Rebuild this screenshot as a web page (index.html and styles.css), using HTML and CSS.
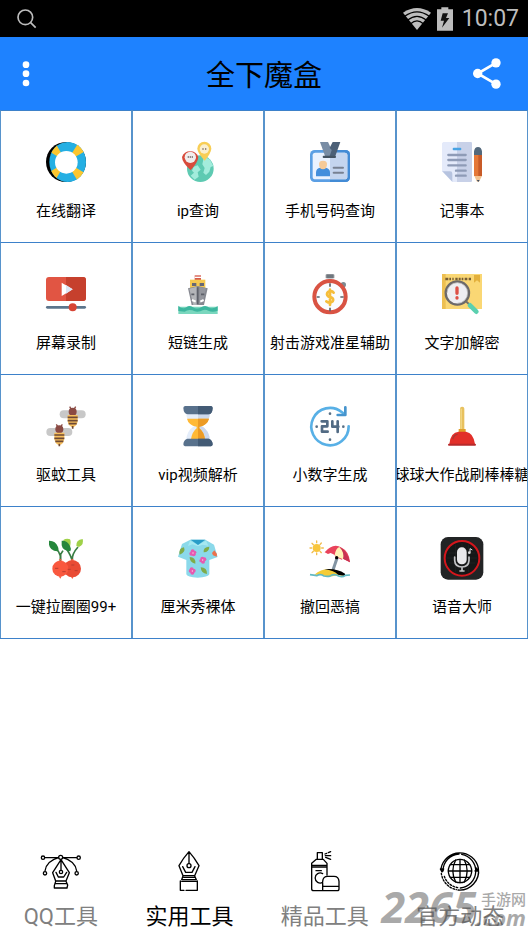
FILE: index.html
```html
<!DOCTYPE html>
<html lang="zh-CN">
<head>
<meta charset="utf-8">
<meta name="viewport" content="width=device-width, initial-scale=1">
<title>全下魔盒</title>
<link rel="stylesheet" href="styles.css">
</head>
<body>
<div class="status">
  <svg class="status-search" viewBox="0 0 60 60"><circle cx="25" cy="25" r="22"/><path d="M41 41L56 56"/></svg>
  <svg class="status-wifi" viewBox="0 0 84 66"><path class="wifi-fill" d="M42 66L0 14Q42 -14 84 14Z"/><path class="wifi-gap" d="M5 25Q42 -2 79 25M14 36Q42 14 70 36M23 47Q42 30 61 47"/></svg>
  <svg class="status-battery" viewBox="0 0 48 70"><path fill="#bdbdbd" d="M13 0H34V6H48V70H0V6H13Z"/><path fill="#111" d="M17 18H33L27 32H37L15 61L21 40H11Z"/></svg>
  <span class="clock">10:07</span>
</div>
<header class="bar">
  <button class="bar-button" type="button" aria-label="菜单"><svg class="dots" viewBox="0 0 24 78"><circle cx="12" cy="11" r="10"/><circle cx="12" cy="38" r="10"/><circle cx="12" cy="66" r="10"/></svg></button>
  <h1 class="title">全下魔盒</h1>
  <button class="bar-button" type="button" aria-label="分享"><svg class="share" viewBox="0 0 84 92"><path d="M69 14L14 46L69 78"/><circle cx="69" cy="14" r="14"/><circle cx="14" cy="46" r="14"/><circle cx="69" cy="78" r="14"/></svg></button>
</header>
<main class="tools">
  <button class="tool" type="button">
    <svg class="icon" viewBox="0 0 120 120"><defs><clipPath id="ring"><ellipse cx="65" cy="60" rx="55" ry="60"/></clipPath></defs><circle cx="60" cy="60" r="60"/><g clip-path="url(#ring)" fill="none" stroke-width="50"><circle cx="61" cy="60" r="50" stroke="#24afe3"/><circle cx="61" cy="60" r="50" stroke="#fbc62f" pathLength="360" stroke-dasharray="28 62" transform="rotate(31 61 60)"/></g><circle cx="61" cy="61" r="34" fill="#fff"/></svg>
    <span class="label">在线翻译</span>
  </button>
  <button class="tool" type="button">
    <svg class="icon" viewBox="0 0 120 120"><circle cx="67" cy="80" r="40" fill="#5ecab2"/><path fill="#a3ecdc" d="M78 43L96 53L106 72L98 75L94 89L84 99L76 92L80 78L73 67ZM47 74L59 70L68 83L59 91L62 104L50 113L38 101L48 92L42 86Z"/><path fill="#f8ce55" d="M80 56Q58 31 58 20A21 21 0 0 1 100 20Q99 34 80 56Z"/><path fill="#d84b3c" d="M38 85Q12 61 12 45A26 26 0 0 1 61 45Q60 61 38 85Z"/><circle cx="79" cy="21" r="14" fill="#faefcf"/><circle cx="37" cy="46" r="17" fill="#f1eeee"/><path stroke="#786867" stroke-width="5" d="M29 45h4m2 0h4m2 0h4M73 21h4m4 0h4"/></svg>
    <span class="label">ip查询</span>
  </button>
  <button class="tool" type="button">
    <svg class="icon" viewBox="0 0 120 120"><rect y="24" width="120" height="96" rx="14" fill="#5b9fe4"/><path fill="#438bd5" d="M60 24h46q14 0 14 14v68q0 14-14 14H60z"/><rect x="8" y="32" width="104" height="80" rx="8" fill="#eaf2ff"/><path fill="#c4d5ef" d="M60 32h44q8 0 8 8v64q0 8-8 8H60z"/><path fill="#798da5" d="M30 0H54L74 42H45Z"/><path fill="#4c6077" d="M68 0H91L76 42H59L65 25L59 17Z"/><rect x="38" y="41" width="40" height="7" rx="3" fill="#455463"/><path fill="#438edc" d="M18 103V91Q18 79 31 77H48Q60 80 60 91V103Z"/><path fill="#f6ca98" d="M27 66Q27 56 39 56T51 66Q51 82 39 82T27 66Z"/><path stroke="#778192" stroke-width="6" stroke-linecap="round" d="M71 77H99M71 92H99"/></svg>
    <span class="label">手机号码查询</span>
  </button>
  <button class="tool" type="button">
    <svg class="icon" viewBox="0 0 120 120"><path fill="#e4eafa" d="M4 0H88V120H31L0 88V4Z"/><path fill="#c8d1e8" d="M45 0H86q4 0 4 4V116q0 4-4 4H45Z"/><path fill="#b6c3df" d="M1 88H24q7 0 7 7v24Z"/><rect x="32" y="17" width="26" height="8" rx="3" fill="#48a3e3"/><path stroke="#8e9bb6" stroke-width="7" stroke-linecap="round" d="M19 39H71M19 54H71M19 70H71M42 86H71M42 101H71"/><path fill="#53697c" d="M96 40V28Q98 15 108 15T120 28V40Z"/><path fill="#e57837" d="M96 39H120V102H96Z"/><path fill="#c85b28" d="M109 39H120V102H109Z"/><path fill="#f4c28f" d="M97 102H120L111 119H105Z"/><path fill="#3f5062" d="M104 114h9l-4 6Z"/></svg>
    <span class="label">记事本</span>
  </button>
  <button class="tool" type="button">
    <svg class="icon" viewBox="0 0 120 120"><rect y="9" width="120" height="72" rx="9" fill="#e15543"/><path fill="#c6402d" d="M60 9h51q9 0 9 9v54q0 9-9 9H60z"/><path fill="#fff" d="M47 26V66L80 46Z"/><path fill="#dce5f4" d="M60 33V59L80 46Z"/><path stroke="#5c758c" stroke-width="8" stroke-linecap="round" d="M4 100H116"/><circle cx="80" cy="100" r="12" fill="#d74434"/></svg>
    <span class="label">屏幕录制</span>
  </button>
  <button class="tool" type="button">
    <svg class="icon" viewBox="0 0 120 120"><path fill="#d65a4b" d="M50 4H69V19H50Z"/><path fill="#fff" d="M50 8H69V12H50Z"/><path fill="#f5c951" d="M36 17H82V47H36Z"/><path fill="#666875" d="M42 27h13v9H42zm23 0h13v9H65z"/><path fill="#868890" d="M30 43L59 36L89 43L78 93H41Z"/><path fill="#b3b5b9" d="M34 44L56 38V93H46Z"/><path fill="#94969d" d="M65 39L84 43L76 78L63 92Z"/><path stroke="#5d6069" stroke-width="5" d="M40 61H49M69 61H79M59 40V90"/><path stroke="#fff" stroke-width="6" d="M42 78L53 83M67 83L77 78"/><path fill="#7ad7be" d="M1 98H119V120H1Z"/><path fill="#3db69e" d="M1 95Q14 108 26 99Q34 92 45 100Q57 108 71 99Q83 92 94 101Q107 106 119 96V110Q103 116 91 110Q79 104 67 112Q54 116 43 109Q30 105 20 113L1 111Z"/></svg>
    <span class="label">短链生成</span>
  </button>
  <button class="tool" type="button">
    <svg class="icon" viewBox="0 0 120 120"><rect x="47" y="1" width="26" height="12" rx="2" fill="#858b91"/><path stroke="#5b626b" stroke-width="3" d="M54 1v12m6-12v12m6-12v12"/><path fill="#c3c9cf" d="M54 13h12v8H54z"/><circle cx="100" cy="32" r="8" fill="#7e8990"/><circle cx="60" cy="68" r="47" fill="#fafcff" stroke="#d95343" stroke-width="12"/><path stroke="#59616b" stroke-width="5" d="M60 28V38M60 101V112M20 69H29M91 69H101"/><path fill="none" stroke="#f5bd3b" stroke-width="8" stroke-linecap="round" stroke-linejoin="round" d="M71 56Q67 50 58 52Q48 56 52 64Q54 68 63 70Q73 74 68 82Q60 90 49 82M60 47V93"/></svg>
    <span class="label">射击游戏准星辅助</span>
  </button>
  <button class="tool" type="button">
    <svg class="icon" viewBox="0 0 120 120"><rect width="120" height="105" fill="#fad774"/><path fill="#edbf51" d="M0 0H11V105H0Z"/><path stroke="#765d35" stroke-width="7" d="M10 15h9m3 0h5m4 0h4m5 0h7m3 0h6m3 0h5m4 0h8m4 0h7"/><path fill="#e3b03c" d="M96 3H114V26L105 19L96 26Z"/><circle cx="46" cy="57" r="35" fill="#eeeef2" stroke="#6c6969" stroke-width="7"/><path fill="none" stroke="#aaa" stroke-width="2" d="M15 57A31 31 0 1 1 46 88"/><path stroke="#dd5047" stroke-width="10" stroke-linecap="round" d="M45 42V58M45 71V72"/><path stroke="#73706b" stroke-width="6" d="M71 81L83 92"/><path stroke="#5bd0af" stroke-width="14" stroke-linecap="round" d="M84 94L103 113"/></svg>
    <span class="label">文字加解密</span>
  </button>
  <button class="tool" type="button">
    <svg class="icon" viewBox="0 0 120 120"><defs><g id="bee"><rect x="1" y="13" width="78" height="24" rx="12" fill="#c8c8c8"/><path fill="none" stroke="#8a4a43" stroke-width="4" d="M31 2L36 10M49 2L44 10"/><circle cx="40" cy="17" r="12" fill="#8a4a43"/><path fill="#f8c05e" d="M25 27H55V43Q55 59 40 65Q25 59 25 43Z"/><path stroke="#6e4935" stroke-width="5" d="M25 34H55M25 44H55M28 53H52M40 60V68"/></g></defs><use href="#bee" x="40"/><use href="#bee" y="53"/></svg>
    <span class="label">驱蚊工具</span>
  </button>
  <button class="tool" type="button">
    <svg class="icon" viewBox="0 0 120 120"><path fill="#e4edfa" d="M24 20H96Q95 47 71 60Q93 72 96 103H24Q27 73 49 60Q26 48 24 20Z"/><path fill="#ccd8ec" d="M60 20H96Q95 47 71 60Q93 72 96 103H60Z"/><path fill="#ffb936" d="M27 38H93Q88 57 64 62V67Q78 78 81 100H39Q42 78 56 67V62Q31 57 27 38Z"/><path fill="#ec9b25" d="M60 38H93Q88 57 64 62V67Q78 78 81 100H60Z"/><path fill="#58718c" d="M21 0H99Q104 1 104 6Q103 25 91 25H29Q17 24 16 6Q16 1 21 0ZM28 98H92Q103 101 104 115Q104 120 99 121H21Q16 120 16 115Q17 101 28 98Z"/><path fill="#435b75" d="M60 0H99Q104 1 104 6Q103 25 91 25H60ZM60 98H92Q103 101 104 115Q104 120 99 121H60Z"/></svg>
    <span class="label">vip视频解析</span>
  </button>
  <button class="tool" type="button">
    <svg class="icon" viewBox="0 0 120 120"><path fill="none" stroke="#58b0e6" stroke-width="8" stroke-linecap="round" d="M116 61A56 56 0 1 1 95 18L104 25"/><path fill="none" stroke="#4694cd" stroke-width="8" stroke-linecap="round" stroke-linejoin="round" d="M106 4V27H83"/><circle cx="60" cy="23" r="4" fill="#597086"/><circle cx="20" cy="62" r="4" fill="#597086"/><circle cx="100" cy="62" r="4" fill="#597086"/><circle cx="60" cy="101" r="4" fill="#597086"/><path fill="none" stroke="#526b84" stroke-width="8" stroke-linejoin="round" stroke-linecap="round" d="M35 46H52V61H36V77H53M67 46V62H85M83 46V78"/></svg>
    <span class="label">小数字生成</span>
  </button>
  <button class="tool" type="button">
    <svg class="icon" viewBox="0 0 120 120"><rect x="54" y="2" width="13" height="74" rx="6" fill="#e8c15e"/><path fill="#f1d582" d="M55 8h5v66h-5z"/><path fill="#df9f29" d="M50 69H71V78H50Z"/><path fill="#e22f29" d="M22 114Q26 78 50 77H72Q94 80 99 114Z"/><path fill="none" stroke="#a63a35" stroke-width="4" d="M32 99Q36 86 47 85"/><path stroke="#b62a2b" stroke-width="6" stroke-linecap="round" d="M21 116H99"/></svg>
    <span class="label">球球大作战刷棒棒糖</span>
  </button>
  <button class="tool" type="button">
    <svg class="icon" viewBox="0 0 120 120"><path fill="none" stroke="#397c43" stroke-width="5" d="M43 69V53Q39 39 29 31M78 68Q76 54 63 35M79 67Q77 48 96 27M44 66V49L51 38"/><path fill="#9fd148" d="M51 7Q61 0 72 4Q76 11 72 26ZM91 24Q89 6 110 3Q115 19 99 27Z"/><path fill="#25863b" d="M9 8Q28 7 36 27Q40 38 34 40Q12 38 9 20ZM47 8Q64 7 72 24Q77 33 73 40Q50 39 47 22Z"/><circle cx="79" cy="92" r="26" fill="#e94b35"/><circle cx="43" cy="92" r="24" fill="#f9583f"/><path fill="#f9583f" d="M37 67l6-5 7 6M73 67l6-5 7 6M38 115l5 7 4-7M75 116l4 7 4-7"/><path stroke="#b93d30" stroke-width="3" d="M27 91h10M49 101h10M76 81h9M65 94h9M86 98h9"/></svg>
    <span class="label">一键拉圈圈99+</span>
  </button>
  <button class="tool" type="button">
    <svg class="icon" viewBox="0 0 120 120"><path fill="#8bd9ea" d="M37 5L12 18L0 56L25 66V109Q27 118 59 119Q91 118 94 109V66L119 57L108 20L82 5Z"/><path fill="#a6e8f2" d="M36 8L60 20L84 8L91 23L74 20L60 25L43 19L30 24Z"/><path fill="#299cc8" d="M38 5H82L60 21Z"/><path fill="#7fac4a" d="M5 50Q1 31 18 28Q24 43 5 50ZM77 43Q75 27 94 26Q94 42 77 43ZM52 77Q34 73 35 57Q54 57 52 77ZM68 88Q88 89 87 108Q69 106 68 88Z"/><g fill="#e65ab0"><circle cx="44" cy="40" r="6"/><circle cx="40" cy="47" r="6"/><circle cx="47" cy="49" r="6"/><circle cx="50" cy="43" r="5"/><circle cx="73" cy="62" r="6"/><circle cx="79" cy="64" r="6"/><circle cx="75" cy="71" r="6"/><circle cx="69" cy="68" r="5"/><circle cx="41" cy="94" r="6"/><circle cx="47" cy="98" r="6"/><circle cx="43" cy="104" r="6"/><circle cx="37" cy="99" r="5"/></g><path fill="#ec714c" d="M109 37L117 48L116 56L105 52L102 45Z"/><g fill="#ffd4e7"><circle cx="45" cy="45" r="2"/><circle cx="74" cy="66" r="2"/><circle cx="43" cy="99" r="2"/></g></svg>
    <span class="label">厘米秀裸体</span>
  </button>
  <button class="tool" type="button">
    <svg class="icon" viewBox="0 0 120 120"><circle cx="20" cy="30" r="12" fill="#f8c63d"/><path stroke="#f2bc4c" stroke-width="4" stroke-linecap="round" d="M20 9v5m0 31v5M0 30h5m30 0h5M6 16l4 4m20 20l4 4M34 15l-4 5M10 40l-4 4"/><path stroke="#8294a3" stroke-width="9" d="M82 58L69 96"/><path fill="#e9435b" d="M44 43Q69 13 95 29Q118 40 120 73L99 62L95 65L77 56L73 50L62 45L54 48Z"/><path fill="#c83251" d="M88 27Q111 36 120 73L99 62Z"/><path fill="#fff1b5" d="M88 27Q77 32 74 51Q80 60 90 60L99 64Q104 43 88 27Z"/><circle cx="80" cy="59" r="5"/><path fill="#f5cc37" d="M13 110Q33 93 58 94Q90 96 105 114L84 112L56 117L35 111Z"/><path d="M43 94Q79 90 105 107L105 114L84 110Q74 98 43 94Z"/><path fill="none" stroke="#62b9c3" stroke-width="5" d="M0 110Q12 112 20 113Q32 106 42 114Q54 117 62 113Q73 106 86 114Q98 119 106 112L120 111"/></svg>
    <span class="label">撤回恶搞</span>
  </button>
  <button class="tool" type="button">
    <svg class="icon" viewBox="0 0 120 120"><rect x="-4" y="-3" width="128" height="128" rx="22" fill="#222425"/><circle cx="60" cy="61" r="52" fill="#151717" stroke="#d4161c" stroke-width="6"/><path stroke="#303335" stroke-width="1" d="M20 45H100M15 60H105M20 75H100M40 20V102M60 14V110M80 20V102"/><rect x="45" y="28" width="29" height="51" rx="14" fill="#e8e8ea"/><path fill="none" stroke="#c2c3c5" stroke-width="5" stroke-linecap="round" d="M38 57V67Q39 86 60 87Q80 86 81 67V57M60 87V98M54 99H66"/><path fill="none" stroke="#ddd" stroke-width="3" d="M84 43V32L91 36"/><circle cx="82" cy="44" r="4" fill="#ddd"/></svg>
    <span class="label">语音大师</span>
  </button>
</main>
<nav class="tabs">
  <button class="tab" type="button">
    <svg class="icon line" viewBox="0 0 120 120"><path d="M12 20H53M65 20H107M53 20Q16 30 12 60M65 20Q103 30 107 60M60 26L35 65L44 90H75L85 65ZM60 27V58M45 64L52 78H68L77 64M44 91L40 104V111H78L80 102L75 91M42 98H77"/><g fill="#fff"><circle cx="6" cy="20" r="5"/><circle cx="59" cy="19" r="6"/><circle cx="113" cy="20" r="5"/><circle cx="12" cy="67" r="5"/><circle cx="107" cy="67" r="5"/><circle cx="60" cy="63" r="5"/></g></svg>
    <span class="tab-label">QQ工具</span>
  </button>
  <button class="tab active" type="button" aria-current="page">
    <svg class="icon line" viewBox="0 0 120 120"><path d="M60 2Q43 21 30 44L42 74H77L90 44Q76 20 60 2ZM60 4V38M41 47L50 64H69L78 47M42 75L38 86H82L77 75M38 91H82M34 90V118H45M51 118H85V90M44 79H76"/><circle cx="60" cy="44" r="6" fill="#fff"/></svg>
    <span class="tab-label">实用工具</span>
  </button>
  <button class="tab" type="button">
    <svg class="icon line" viewBox="0 0 120 120"><path d="M37 5H52V25H37ZM34 25H55L66 37V72M34 25L20 37V113Q20 119 26 119H97Q102 119 102 113V91Q101 76 87 76H68Q54 76 53 91V118M20 43H66M20 48H66M33 59H49M55 106H102M53 68A15 15 0 1 0 53 94M60 9L65 7M70 5L77 2M61 14H77M62 19L77 25"/></svg>
    <span class="tab-label">精品工具</span>
  </button>
  <button class="tab" type="button">
    <svg class="icon line" viewBox="0 0 120 120"><circle cx="60" cy="60" r="35"/><path d="M60 25V95M25 60H95M31 41H89M31 79H89M47 27Q30 60 47 93M73 27Q90 60 73 93M3 53A57 57 0 0 1 115 51A57 57 0 0 1 54 117M9 60A51 51 0 0 1 57 9M65 10A51 51 0 0 1 61 111"/><path stroke-dasharray="5 5" d="M4 67A57 57 0 0 0 49 116M13 76A50 50 0 0 0 55 110"/><path fill="#000" d="M1 54h10l-5 9zM105 60h10l-5-9z"/></svg>
    <span class="tab-label">官方动态</span>
  </button>
</nav>
<div class="watermark">
  <span class="mark-number">2265</span>
  <span class="mark-side"><span class="mark-name">手游网</span><span class="mark-domain">.com</span></span>
</div>
</body>
</html>
```
FILE: styles.css
```css
* {
  box-sizing: border-box;
}

body {
  display: flex;
  flex-direction: column;
  position: relative;
  min-height: 100vh;
  margin: 0;
  background: #fff;
  color: #000;
  font-family: Roboto, "Noto Sans CJK SC", sans-serif;
}

button {
  margin: 0;
  padding: 0;
  border: 0;
  background: none;
  color: inherit;
  font: inherit;
}

svg {
  display: block;
  flex: none;
  overflow: visible;
}

.status {
  display: flex;
  align-items: center;
  height: 37px;
  padding: 0 9px 0 17px;
  background: #000;
}

.status-search {
  width: 20px;
  height: 20px;
  margin-right: auto;
  fill: none;
  stroke: #bdbdbd;
  stroke-width: 5;
}

.status-wifi {
  width: 28px;
  height: 22px;
  margin-right: 6px;
}

.wifi-fill {
  fill: #bdbdbd;
}

.wifi-gap {
  fill: none;
  stroke: #000;
  stroke-width: 4;
}

.status-battery {
  width: 16px;
  height: 24px;
  margin-right: 9px;
}

.clock {
  color: #bdbdbd;
  font-size: 23px;
  line-height: 37px;
}

.bar {
  display: flex;
  align-items: center;
  justify-content: space-between;
  height: 73px;
  padding: 0 15px;
  background: #1e82ff;
}

.bar-button {
  display: flex;
  align-items: center;
  justify-content: center;
  height: 52px;
}

.bar-button:first-child {
  padding: 0 7px;
  margin-right: 30px;
}

.bar-button:last-child {
  padding: 0 12px;
}

.dots {
  width: 8px;
  height: 26px;
  fill: #fff;
}

.share {
  width: 28px;
  height: 31px;
  fill: #fff;
}

.share path {
  fill: none;
  stroke: #fff;
  stroke-width: 8;
}

.title {
  margin: 0;
  padding-top: 4px;
  font-size: 29px;
  font-weight: 400;
  line-height: 40px;
}

.tools {
  display: grid;
  grid-template-columns: repeat(4, minmax(0, 1fr));
  border-bottom: 1px solid #3d81ca;
}

.tool {
  display: flex;
  flex-direction: column;
  align-items: center;
  gap: 19px;
  padding: 31px 0 21px;
  overflow: hidden;
  border: 1px solid #5793cc;
  border-top-color: #3d81ca;
  border-bottom: 0;
}

.icon {
  width: 40px;
  height: 40px;
}

.label {
  font-size: 15px;
  line-height: 20px;
  white-space: nowrap;
}

.tabs {
  display: flex;
  justify-content: space-around;
  margin-top: auto;
  padding: 20px 0 10px;
}

.tab {
  display: flex;
  flex-direction: column;
  align-items: center;
  gap: 13px;
  color: #808080;
}

.tab.active {
  color: #000;
}

.tab-label {
  font-size: 22px;
  line-height: 26px;
  white-space: nowrap;
}

.line {
  fill: none;
  stroke: #000;
  stroke-width: 4;
  stroke-linecap: round;
  stroke-linejoin: round;
}

.watermark {
  display: flex;
  align-items: flex-end;
  position: absolute;
  right: 2px;
  bottom: 14px;
  color: #555;
  opacity: 0.5;
  pointer-events: none;
}

.mark-number {
  font-family: "Open Sans", sans-serif;
  font-size: 43px;
  font-style: italic;
  font-weight: 700;
  line-height: 38px;
}

.mark-side {
  display: flex;
  flex-direction: column;
  align-items: flex-end;
}

.mark-name {
  font-size: 15px;
  font-weight: 500;
  line-height: 16px;
}

.mark-domain {
  font-family: "Open Sans", sans-serif;
  font-size: 22px;
  font-style: italic;
  font-weight: 700;
  line-height: 18px;
}
```
